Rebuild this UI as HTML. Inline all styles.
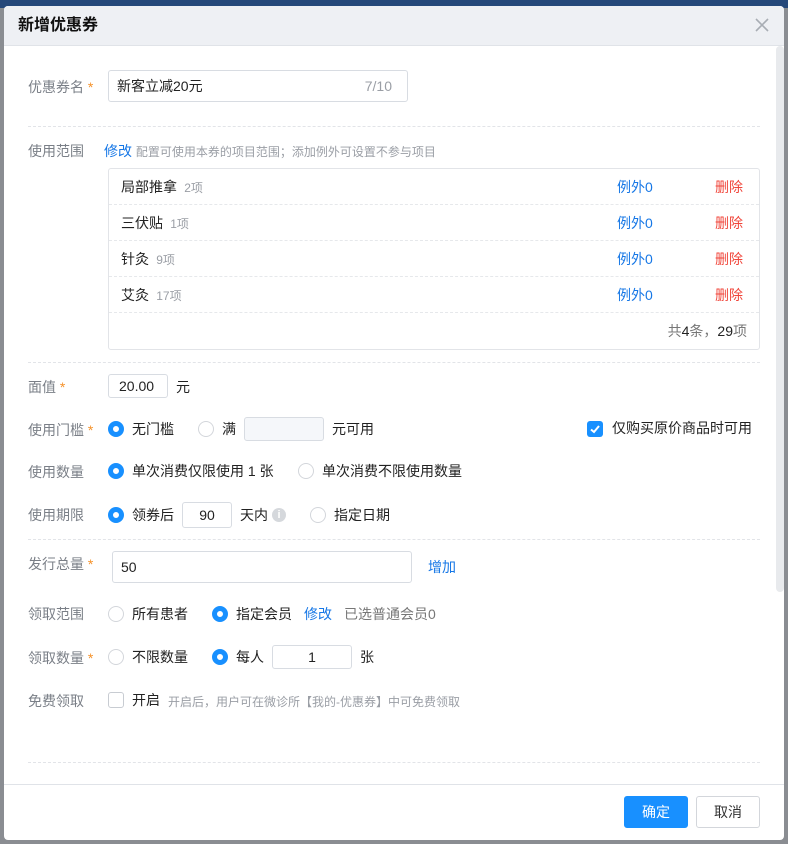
<!DOCTYPE html>
<html><head><meta charset="utf-8"><style>
*{box-sizing:border-box;margin:0;padding:0}
body{width:788px;height:844px;background:#8a8d92;font-family:"Liberation Sans","Noto Sans CJK SC",sans-serif;font-size:14px;line-height:18px;color:#222;position:relative;overflow:hidden}
.top{position:absolute;left:0;top:0;width:788px;height:8px;background:#25487a}
.dlg{position:absolute;left:4px;top:6px;width:780px;height:834px;background:#fff;border-radius:4px;overflow:hidden}
.hd{height:40px;background:#eef0f4;border-bottom:1px solid #e0e3e8;padding-left:14px;line-height:40px;font-size:16px;font-weight:bold;color:#111}
.x{position:absolute;right:14px;top:11px;width:16px;height:16px}
.ab{position:absolute;white-space:nowrap}
.lbl{color:#7a7f87;font-size:14px}
.req{color:#f5922a}
.dash{position:absolute;left:24px;width:732px;border-top:1px dashed #e2e4e8}
.inp{position:absolute;border:1px solid #d8dce2;border-radius:3px;background:#fff;height:32px;line-height:30px;padding-left:8px}
.blue{color:#1677e6}
.red{color:#f0453a}
.radio{position:absolute;width:16px;height:16px;border-radius:50%;border:1px solid #d3d6db;background:#fff}
.radio.on{border:5px solid #1890ff}
.gray{color:#9a9ea5;font-size:12px}
.tbl{position:absolute;left:104px;top:162px;width:652px;height:182px;border:1px solid #e2e4e8;border-radius:3px}
.row{position:absolute;left:0;width:650px;height:36px;border-bottom:1px dashed #e6e8eb;line-height:36px}
.sb{position:absolute;right:0;top:40px;width:8px;height:546px;background:#e8eaed;border-radius:4px}
.ft{position:absolute;left:0;top:778px;width:780px;border-top:1px solid #e0e3e8}
.btn{position:absolute;height:32px;line-height:30px;text-align:center;border-radius:3px;font-size:14px}
</style></head><body>
<div class="top"></div>
<div class="dlg">
<div class="hd">新增优惠券</div>
<svg class="x" viewBox="0 0 16 16"><path d="M2 2L14 14M14 2L2 14" stroke="#a8adb4" stroke-width="1.6"/></svg>
<div class="sb"></div>

<div class="ab lbl" style="left:24px;top:72px">优惠券名 <span class="req">*</span></div>
<div class="inp" style="left:104px;top:64px;width:300px">新客立减20元<span style="position:absolute;right:15px;color:#9a9ea5">7/10</span></div>
<div class="dash" style="top:120px"></div>

<div class="ab lbl" style="left:24px;top:136px">使用范围</div>
<div class="ab" style="left:100px;top:136px"><span class="blue">修改</span> <span class="gray">配置可使用本券的项目范围；添加例外可设置不参与项目</span></div>
<div class="tbl">
<div class="row" style="top:0"><span style="position:absolute;left:12px">局部推拿 <span class="gray">&nbsp;2项</span></span><span class="blue" style="position:absolute;left:508px">例外0</span><span class="red" style="position:absolute;left:606px">删除</span></div>
<div class="row" style="top:36px"><span style="position:absolute;left:12px">三伏贴 <span class="gray">&nbsp;1项</span></span><span class="blue" style="position:absolute;left:508px">例外0</span><span class="red" style="position:absolute;left:606px">删除</span></div>
<div class="row" style="top:72px"><span style="position:absolute;left:12px">针灸 <span class="gray">&nbsp;9项</span></span><span class="blue" style="position:absolute;left:508px">例外0</span><span class="red" style="position:absolute;left:606px">删除</span></div>
<div class="row" style="top:108px"><span style="position:absolute;left:12px">艾灸 <span class="gray">&nbsp;17项</span></span><span class="blue" style="position:absolute;left:508px">例外0</span><span class="red" style="position:absolute;left:606px">删除</span></div>
<div style="position:absolute;right:12px;top:144px;line-height:36px;color:#777">共<b style="color:#222;font-weight:normal">4</b>条，<span style="color:#222">29</span>项</div>
</div>
<div class="dash" style="top:356px"></div>

<div class="ab lbl" style="left:24px;top:372px">面值 <span class="req">*</span></div>
<div class="inp" style="left:104px;top:368px;width:60px;height:24px;line-height:22px;padding-left:10px">20.00</div>
<div class="ab" style="left:172px;top:372px">元</div>

<div class="ab lbl" style="left:24px;top:415px">使用门槛 <span class="req">*</span></div>
<div class="radio on" style="left:104px;top:415px"></div><div class="ab" style="left:128px;top:414px">无门槛</div>
<div class="radio" style="left:194px;top:415px"></div><div class="ab" style="left:218px;top:414px">满</div>
<div class="inp" style="left:240px;top:411px;width:80px;height:24px;background:#f5f7fa"></div>
<div class="ab" style="left:328px;top:414px">元可用</div>
<div class="ab" style="left:583px;top:415px;width:16px;height:16px;background:#1890ff;border-radius:3px"><svg width="16" height="16" viewBox="0 0 16 16"><path d="M4 8.5L7 11L12 5" stroke="#fff" stroke-width="2" fill="none"/></svg></div>
<div class="ab" style="left:608px;top:413px">仅购买原价商品时可用</div>

<div class="ab lbl" style="left:24px;top:457px">使用数量</div>
<div class="radio on" style="left:104px;top:457px"></div><div class="ab" style="left:128px;top:456px">单次消费仅限使用 1 张</div>
<div class="radio" style="left:294px;top:457px"></div><div class="ab" style="left:318px;top:456px">单次消费不限使用数量</div>

<div class="ab lbl" style="left:24px;top:500px">使用期限</div>
<div class="radio on" style="left:104px;top:501px"></div><div class="ab" style="left:128px;top:500px">领券后</div>
<div class="inp" style="left:178px;top:496px;width:50px;height:26px;line-height:24px;text-align:center;padding:0">90</div>
<div class="ab" style="left:236px;top:500px">天内</div>
<div class="ab" style="left:268px;top:502px;width:14px;height:14px;border-radius:50%;background:#d5d8dc;color:#fff;font-size:11px;line-height:14px;text-align:center;font-weight:bold">i</div>
<div class="radio" style="left:306px;top:501px"></div><div class="ab" style="left:330px;top:500px">指定日期</div>
<div class="dash" style="top:533px"></div>

<div class="ab lbl" style="left:24px;top:549px">发行总量 <span class="req">*</span></div>
<div class="inp" style="left:108px;top:545px;width:300px;line-height:30px">50</div>
<div class="ab blue" style="left:424px;top:552px">增加</div>

<div class="ab lbl" style="left:24px;top:599px">领取范围</div>
<div class="radio" style="left:104px;top:600px"></div><div class="ab" style="left:128px;top:599px">所有患者</div>
<div class="radio on" style="left:208px;top:600px"></div><div class="ab" style="left:232px;top:599px">指定会员</div>
<div class="ab blue" style="left:300px;top:599px">修改</div>
<div class="ab" style="left:340px;top:599px;color:#777">已选普通会员0</div>

<div class="ab lbl" style="left:24px;top:643px">领取数量 <span class="req">*</span></div>
<div class="radio" style="left:104px;top:643px"></div><div class="ab" style="left:128px;top:642px">不限数量</div>
<div class="radio on" style="left:208px;top:643px"></div><div class="ab" style="left:232px;top:642px">每人</div>
<div class="inp" style="left:268px;top:639px;width:80px;height:24px;line-height:22px;text-align:center;padding:0">1</div>
<div class="ab" style="left:356px;top:642px">张</div>

<div class="ab lbl" style="left:24px;top:686px">免费领取</div>
<div class="ab" style="left:104px;top:686px;width:16px;height:16px;border:1px solid #c8ccd2;border-radius:3px"></div>
<div class="ab" style="left:128px;top:685px">开启</div>
<div class="ab gray" style="left:164px;top:687px">开启后，用户可在微诊所【我的-优惠券】中可免费领取</div>
<div class="dash" style="top:756px"></div>

<div class="ft"></div>
<div class="btn" style="left:620px;top:790px;width:64px;background:#1890ff;color:#fff;border:1px solid #1890ff">确定</div>
<div class="btn" style="left:692px;top:790px;width:64px;border:1px solid #d3d6db;color:#333">取消</div>
</div>
</body></html>
